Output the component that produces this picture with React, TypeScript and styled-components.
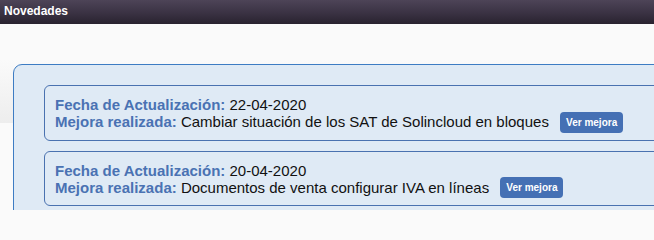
import React from 'react'
import styled, { createGlobalStyle } from 'styled-components'

const GlobalStyle = createGlobalStyle`
  html, body {
    margin: 0;
    padding: 0;
    background: #fafafa;
    font-family: "Liberation Sans", Arial, sans-serif;
  }
`

const Page = styled.div`
  width: 654px;
  height: 210px;
  overflow: hidden;
`

const Header = styled.div`
  height: 24px;
  background: linear-gradient(to bottom, #4d4457 0%, #3a3243 55%, #29222f 100%);
  color: #fff;
  font-size: 12px;
  font-weight: bold;
  line-height: 23px;
  padding-left: 4px;
`

const Content = styled.div`
  padding: 40px 0 0 13px;
  background: linear-gradient(
    to bottom,
    #fafafa 0,
    #fafafa 36px,
    #ededed 99px,
    #fafafa 99px
  );
`

const Panel = styled.div`
  width: 700px;
  background: #dfeaf5;
  border: 1px solid #3d7cc3;
  border-radius: 9px;
  padding: 20px 0 20px 30px;
`

const Card = styled.div`
  width: 640px;
  background: #dfeaf5;
  border: 1px solid #4a72b0;
  border-radius: 6px;
  padding: 10px 10px 7px 10px;
  margin-bottom: 10px;
  font-size: 15px;
  line-height: 17px;
  color: #111;
`

const Line = styled.div`
  white-space: nowrap;
`

const Label = styled.span`
  color: #4a72b3;
  font-weight: bold;
`

const Button = styled.span`
  display: inline-block;
  vertical-align: middle;
  margin-left: 7px;
  margin-top: -2px;
  height: 21px;
  line-height: 21px;
  padding: 0 6px;
  border-radius: 4px;
  background: #4570b4;
  color: #fff;
  font-size: 10px;
  font-weight: bold;
`

const updates = [
  { date: '22-04-2020', text: 'Cambiar situación de los SAT de Solincloud en bloques' },
  { date: '20-04-2020', text: 'Documentos de venta configurar IVA en líneas' },
]

export default function App() {
  return (
    <Page>
      <GlobalStyle />
      <Header>Novedades</Header>
      <Content>
        <Panel>
          {updates.map((u) => (
            <Card key={u.date}>
              <Line>
                <Label>Fecha de Actualización:</Label> {u.date}
              </Line>
              <Line>
                <Label>Mejora realizada:</Label> {u.text}{' '}
                <Button>Ver mejora</Button>
              </Line>
            </Card>
          ))}
        </Panel>
      </Content>
    </Page>
  )
}
